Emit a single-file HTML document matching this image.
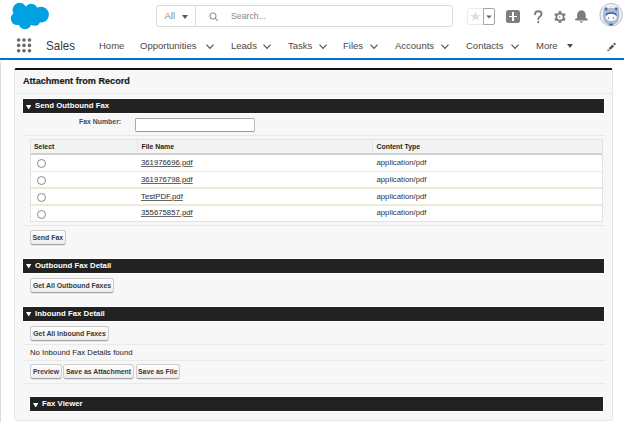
<!DOCTYPE html>
<html><head><meta charset="utf-8">
<style>
*{margin:0;padding:0;box-sizing:border-box}
html,body{width:624px;height:422px;overflow:hidden;background:#fff;font-family:"Liberation Sans",sans-serif;position:relative}
.a{position:absolute}
.nav{position:absolute;font-size:9.5px;color:#4a4846;white-space:nowrap;line-height:11px}
.panel{position:absolute;left:14px;top:67.5px;width:599px;height:353px;background:#f7f7f7;border:1px solid #e6e6e6;border-top:2.5px solid #111;border-radius:2.5px 2.5px 4px 4px;box-shadow:inset 0 1px 0 #fff}
.bar{position:absolute;background:#222;border:1px solid #fff;height:16px;color:#fff;font-weight:bold;font-size:7.8px;white-space:nowrap}
.bar .tri{position:absolute;left:2.8px;top:5.5px;width:5.4px;height:4.6px}
.bar .t{position:absolute;left:12px;top:2.3px;line-height:9px}
.sep{position:absolute;height:1px;background:#e9e9e9}
.btn{position:absolute;height:15px;padding-top:0.5px;border:1px solid #cdcdcd;border-bottom-color:#a5a5a5;border-radius:3px;background:linear-gradient(#fff,#ededed);box-shadow:0 1px 0 rgba(0,0,0,0.08);font-weight:bold;font-size:6.9px;color:#3a3a3a;line-height:12px;text-align:center;white-space:nowrap}
.th{position:absolute;font-weight:bold;font-size:6.9px;color:#222;white-space:nowrap;line-height:8px}
.td{position:absolute;font-size:7.75px;color:#333;white-space:nowrap;line-height:9px}
.lnk{text-decoration:underline;text-decoration-color:#666;color:#2a2a2a}
.radio{position:absolute;width:9px;height:9px;border:1px solid #8a8a8a;border-radius:50%;background:#fff}
.rowl{position:absolute;left:31px;width:571px;height:1px;background:#ecebd8}
.chev{position:absolute;top:44px}
</style></head><body>
<!-- header -->
<svg class="a" style="left:0;top:0" width="56" height="32" viewBox="0 0 56 32">
 <g fill="#00a1e0">
  <circle cx="19.6" cy="9.9" r="7.1"/>
  <circle cx="31.2" cy="10.3" r="6.6"/>
  <circle cx="41" cy="14.6" r="7.9"/>
  <circle cx="17.2" cy="18.6" r="6.4"/>
  <circle cx="25" cy="22.7" r="6.5"/>
  <circle cx="34.8" cy="20.2" r="5.6"/>
  <ellipse cx="28" cy="16" rx="9" ry="7"/>
 </g>
</svg>
<div class="a" style="left:156px;top:5px;width:297px;height:22px;border:1px solid #dddbda;border-radius:3px"></div>
<div class="a" style="left:195px;top:6px;width:1px;height:20px;background:#dddbda"></div>
<div class="a" style="left:164.5px;top:10px;font-size:9.5px;color:#8a8886">All</div>
<div class="a" style="left:181.5px;top:14.7px;width:0;height:0;border-left:3.6px solid transparent;border-right:3.6px solid transparent;border-top:4px solid #5a5856"></div>
<svg class="a" style="left:209px;top:12px" width="10" height="9" viewBox="0 0 10 9"><circle cx="4" cy="4" r="3" fill="none" stroke="#9a9896" stroke-width="1.1"/><line x1="6.2" y1="6.2" x2="8.8" y2="8.8" stroke="#9a9896" stroke-width="1.2"/></svg>
<div class="a" style="left:230.5px;top:10px;font-size:9.5px;color:#8a8886;transform:scaleX(0.92);transform-origin:0 0">Search...</div>
<!-- star -->
<div class="a" style="left:467px;top:8px;width:28px;height:16.5px;border:1px solid #ecebea;border-radius:2px"></div>
<div class="a" style="left:483px;top:8px;width:12px;height:16.5px;border:1px solid #a8a6a4;border-radius:0 2px 2px 0;background:#fff"></div>
<svg class="a" style="left:469.5px;top:11px" width="11" height="10.5" viewBox="0 0 20 19"><path d="M10 0.5L12.6 7H19.5L13.9 11.2L16 18.3L10 14L4 18.3L6.1 11.2L0.5 7H7.4z" fill="#dedede"/></svg>
<svg class="a" style="left:486px;top:15px" width="6" height="4" viewBox="0 0 6 4"><path d="M0.2 0.4H5.8L3 3.6z" fill="#666"/></svg>
<!-- plus -->
<div class="a" style="left:506px;top:9.5px;width:13.5px;height:13.5px;background:#7e7e7e;border-radius:2.5px"></div>
<div class="a" style="left:511.8px;top:12.3px;width:1.9px;height:8.4px;background:#fff"></div>
<div class="a" style="left:508.5px;top:15.5px;width:8.6px;height:1.9px;background:#fff"></div>
<!-- ? -->
<svg class="a" style="left:533px;top:9.6px" width="11" height="14" viewBox="0 0 11 14"><path d="M2 4.2C2 2.2 3.5 1.2 5.3 1.2C7.2 1.2 8.6 2.3 8.6 4C8.6 5.4 7.7 6 6.7 6.7C5.8 7.3 5.3 7.9 5.3 9.2" fill="none" stroke="#7b7b7b" stroke-width="1.9" stroke-linecap="round"/><circle cx="5.3" cy="12.2" r="1.1" fill="#7b7b7b"/></svg>
<!-- gear -->
<svg class="a" style="left:554px;top:10.8px" width="12" height="12.2" viewBox="0 0 12 12.2">
 <g fill="#7d7d7d" transform="translate(0 0.1)"><circle cx="6" cy="6" r="4.5"/>
 <rect x="4.7" y="0" width="2.6" height="12" rx="0.7"/>
 <rect x="4.7" y="0" width="2.6" height="12" rx="0.7" transform="rotate(60 6 6)"/><rect x="4.7" y="0" width="2.6" height="12" rx="0.7" transform="rotate(-60 6 6)"/></g>
 <circle cx="6" cy="6.1" r="2.7" fill="#fff"/><circle cx="5.6" cy="6.1" r="0.8" fill="#8a8a8a"/>
</svg>
<!-- bell -->
<svg class="a" style="left:575px;top:9.5px" width="13" height="13" viewBox="0 0 13 13">
 <path d="M6.4 0.2C3.6 0.2 2.1 2.4 2.1 5.2V8.1Q2.1 8.7 1.2 9H11.6Q10.7 8.7 10.7 8.1V5.2C10.7 2.4 9.2 0.2 6.4 0.2z" fill="#7d7d7d"/>
 <rect x="0" y="8.4" width="12.8" height="2" rx="1" fill="#7d7d7d"/>
 <path d="M4.9 11.2H7.9Q7.7 12.7 6.4 12.7Q5.1 12.7 4.9 11.2z" fill="#7d7d7d"/>
</svg>
<!-- avatar -->
<svg class="a" style="left:596px;top:0px" width="28" height="30" viewBox="0 0 28 30">
 <circle cx="15.15" cy="14.75" r="11.3" fill="#edf1f7" stroke="#b5b5b5" stroke-width="0.9"/>
 <path d="M7.4 11.5Q7 8.2 9.2 7.6Q11 7.2 12.2 8.2Q15 7.4 17.8 8.2Q19.4 7.2 21.2 7.6Q23.4 8.2 23 11.5Q24 16 22.6 20Q21 24.6 15.1 25Q9.2 24.6 7.7 20Q6.4 16 7.4 11.5z" fill="#a9bad7"/>
 <ellipse cx="10.2" cy="8.9" rx="1.1" ry="1.6" fill="#46629a"/>
 <ellipse cx="20.2" cy="8.9" rx="1.1" ry="1.6" fill="#46629a"/>
 <path d="M9.8 16Q9.6 12.8 12.2 12.8Q13.4 11.7 15 12.4Q16.6 11.6 18 12.7Q20.8 12.8 20.6 16z" fill="#3f5b8f"/>
 <ellipse cx="15.2" cy="17.4" rx="5.5" ry="3.7" fill="#fff"/>
 <circle cx="12.5" cy="18" r="0.8" fill="#46629a"/><circle cx="17.6" cy="18" r="0.8" fill="#46629a"/>
 <ellipse cx="15" cy="24.5" rx="2.2" ry="1.1" fill="#3f5b8f"/>
</svg>

<!-- nav -->
<svg class="a" style="left:16px;top:38px" width="16" height="15" viewBox="0 0 16 15"><g fill="#6b6967">
<circle cx="2.6" cy="2" r="1.8"/><circle cx="8" cy="2" r="1.8"/><circle cx="13.5" cy="2" r="1.8"/>
<circle cx="2.6" cy="7.4" r="1.8"/><circle cx="8" cy="7.4" r="1.8"/><circle cx="13.5" cy="7.4" r="1.8"/>
<circle cx="2.6" cy="12.8" r="1.8"/><circle cx="8" cy="12.8" r="1.8"/><circle cx="13.5" cy="12.8" r="1.8"/></g></svg>
<div class="a" style="left:45.8px;top:40px;font-size:12.2px;color:#3a3836;line-height:13px;transform:scaleX(0.95);transform-origin:0 0">Sales</div>
<div class="nav" style="left:99px;top:39.5px">Home</div>
<div class="nav" style="left:140px;top:39.5px">Opportunities</div>
<div class="nav" style="left:231px;top:39.5px">Leads</div>
<div class="nav" style="left:288px;top:39.5px">Tasks</div>
<div class="nav" style="left:343px;top:39.5px">Files</div>
<div class="nav" style="left:395px;top:39.5px">Accounts</div>
<div class="nav" style="left:466px;top:39.5px">Contacts</div>
<div class="nav" style="left:536px;top:39.5px">More</div>
<svg class="chev" style="left:206px" width="8" height="6" viewBox="0 0 8 6"><path d="M0.5 0.6L4 4.5L7.5 0.6" fill="none" stroke="#545250" stroke-width="1.15"/></svg>
<svg class="chev" style="left:263px" width="8" height="6" viewBox="0 0 8 6"><path d="M0.5 0.6L4 4.5L7.5 0.6" fill="none" stroke="#545250" stroke-width="1.15"/></svg>
<svg class="chev" style="left:318.5px" width="8" height="6" viewBox="0 0 8 6"><path d="M0.5 0.6L4 4.5L7.5 0.6" fill="none" stroke="#545250" stroke-width="1.15"/></svg>
<svg class="chev" style="left:370px" width="8" height="6" viewBox="0 0 8 6"><path d="M0.5 0.6L4 4.5L7.5 0.6" fill="none" stroke="#545250" stroke-width="1.15"/></svg>
<svg class="chev" style="left:441px" width="8" height="6" viewBox="0 0 8 6"><path d="M0.5 0.6L4 4.5L7.5 0.6" fill="none" stroke="#545250" stroke-width="1.15"/></svg>
<svg class="chev" style="left:511px" width="8" height="6" viewBox="0 0 8 6"><path d="M0.5 0.6L4 4.5L7.5 0.6" fill="none" stroke="#545250" stroke-width="1.15"/></svg>
<div class="a" style="left:566.8px;top:43.5px;width:0;height:0;border-left:3.6px solid transparent;border-right:3.6px solid transparent;border-top:4px solid #514f4d"></div>
<svg class="a" style="left:600px;top:38.5px" width="22" height="16" viewBox="0 0 22 16"><g fill="#58565a"><path d="M7.3 12.3L7.9 9.9L9.7 11.7z"/><path d="M8.6 9.2L12.4 5.4L14.2 7.2L10.4 11z"/><path d="M13.1 4.7L13.9 3.9Q14.4 3.5 14.9 3.9L15.6 4.6Q16 5.1 15.6 5.6L14.9 6.5z"/></g></svg>
<div class="a" style="left:0;top:58px;width:624px;height:2px;background:#0070d2"></div>
<div class="a" style="left:0;top:60px;width:8px;height:362px;border-left:1px solid #dcdcdc;border-top:0;border-radius:4px 0 0 0"></div>

<!-- panel -->
<div class="panel"></div>
<div class="a" style="left:23px;top:74.8px;font-size:9.6px;font-weight:bold;color:#1a1a1a;line-height:11px;transform:scaleX(0.95);transform-origin:0 0;-webkit-text-stroke:0.2px #1a1a1a">Attachment from Record</div>
<div class="sep" style="left:16px;top:93px;width:596px"></div>

<div class="bar" style="left:22px;top:98px;width:583px"><svg class="tri" viewBox="0 0 10 8" preserveAspectRatio="none"><path d="M0 0H10L5 8z" fill="#fff"/></svg><span class="t">Send Outbound Fax</span></div>
<div class="a" style="left:79px;top:117.5px;font-size:6.9px;font-weight:bold;color:#4a4a56;line-height:8px">Fax Number:</div>
<div class="a" style="left:135px;top:118px;width:119.5px;height:14px;border:1px solid #a9a9a9;border-right-color:#bdbdbd;border-bottom-color:#999;border-radius:2px;background:#fff"></div>
<div class="sep" style="left:23px;top:135px;width:582px"></div>

<!-- table -->
<div class="a" style="left:30px;top:139px;width:573px;height:83px;background:#fff;border:1px solid #e0e3e5"></div>
<div class="a" style="left:31px;top:140px;width:571px;height:15px;background:#f2f3f3;border-bottom:2px solid #d0d0d0"></div>
<div class="a" style="left:137px;top:140px;width:1px;height:13.5px;background:#e0e3e5"></div>
<div class="a" style="left:372px;top:140px;width:1px;height:13.5px;background:#e0e3e5"></div>
<div class="th" style="left:34px;top:143px">Select</div>
<div class="th" style="left:141.5px;top:143px">File Name</div>
<div class="th" style="left:376.5px;top:143px">Content Type</div>
<div class="rowl" style="top:170.5px;height:1.5px"></div>
<div class="rowl" style="top:187px;height:1.5px"></div>
<div class="rowl" style="top:204px;height:1.5px"></div>
<div class="radio" style="left:37px;top:159px"></div>
<div class="radio" style="left:37px;top:176px"></div>
<div class="radio" style="left:37px;top:192.5px"></div>
<div class="radio" style="left:37px;top:210px"></div>
<div class="td lnk" style="left:141px;top:158px">361976696.pdf</div>
<div class="td lnk" style="left:141px;top:175px">361976798.pdf</div>
<div class="td lnk" style="left:141px;top:191.5px">TestPDF.pdf</div>
<div class="td lnk" style="left:141px;top:208px">355675857.pdf</div>
<div class="td" style="left:376.5px;top:158px">application/pdf</div>
<div class="td" style="left:376.5px;top:175px">application/pdf</div>
<div class="td" style="left:376.5px;top:191.5px">application/pdf</div>
<div class="td" style="left:376.5px;top:208px">application/pdf</div>
<div class="sep" style="left:23px;top:225px;width:582px"></div>
<div class="btn" style="left:30px;top:230px;width:35.5px">Send Fax</div>

<div class="bar" style="left:22px;top:257.5px;width:583px"><svg class="tri" viewBox="0 0 10 8" preserveAspectRatio="none"><path d="M0 0H10L5 8z" fill="#fff"/></svg><span class="t">Outbound Fax Detail</span></div>
<div class="btn" style="left:30px;top:278px;width:84px">Get All Outbound Faxes</div>

<div class="bar" style="left:22px;top:305.5px;width:583px"><svg class="tri" viewBox="0 0 10 8" preserveAspectRatio="none"><path d="M0 0H10L5 8z" fill="#fff"/></svg><span class="t">Inbound Fax Detail</span></div>
<div class="btn" style="left:30px;top:326px;width:79px">Get All Inbound Faxes</div>
<div class="sep" style="left:23px;top:344px;width:582px"></div>
<div class="a" style="left:30px;top:347.5px;font-size:7.75px;color:#222;line-height:9px">No Inbound Fax Details found</div>
<div class="sep" style="left:23px;top:359.5px;width:582px"></div>
<div class="btn" style="left:30px;top:364px;width:32px">Preview</div>
<div class="btn" style="left:63px;top:364px;width:71px">Save as Attachment</div>
<div class="btn" style="left:135.5px;top:364px;width:44.5px">Save as File</div>
<div class="sep" style="left:23px;top:383px;width:582px"></div>

<div class="bar" style="left:29px;top:396px;width:575px"><svg class="tri" viewBox="0 0 10 8" preserveAspectRatio="none"><path d="M0 0H10L5 8z" fill="#fff"/></svg><span class="t">Fax Viewer</span></div>
</body></html>
